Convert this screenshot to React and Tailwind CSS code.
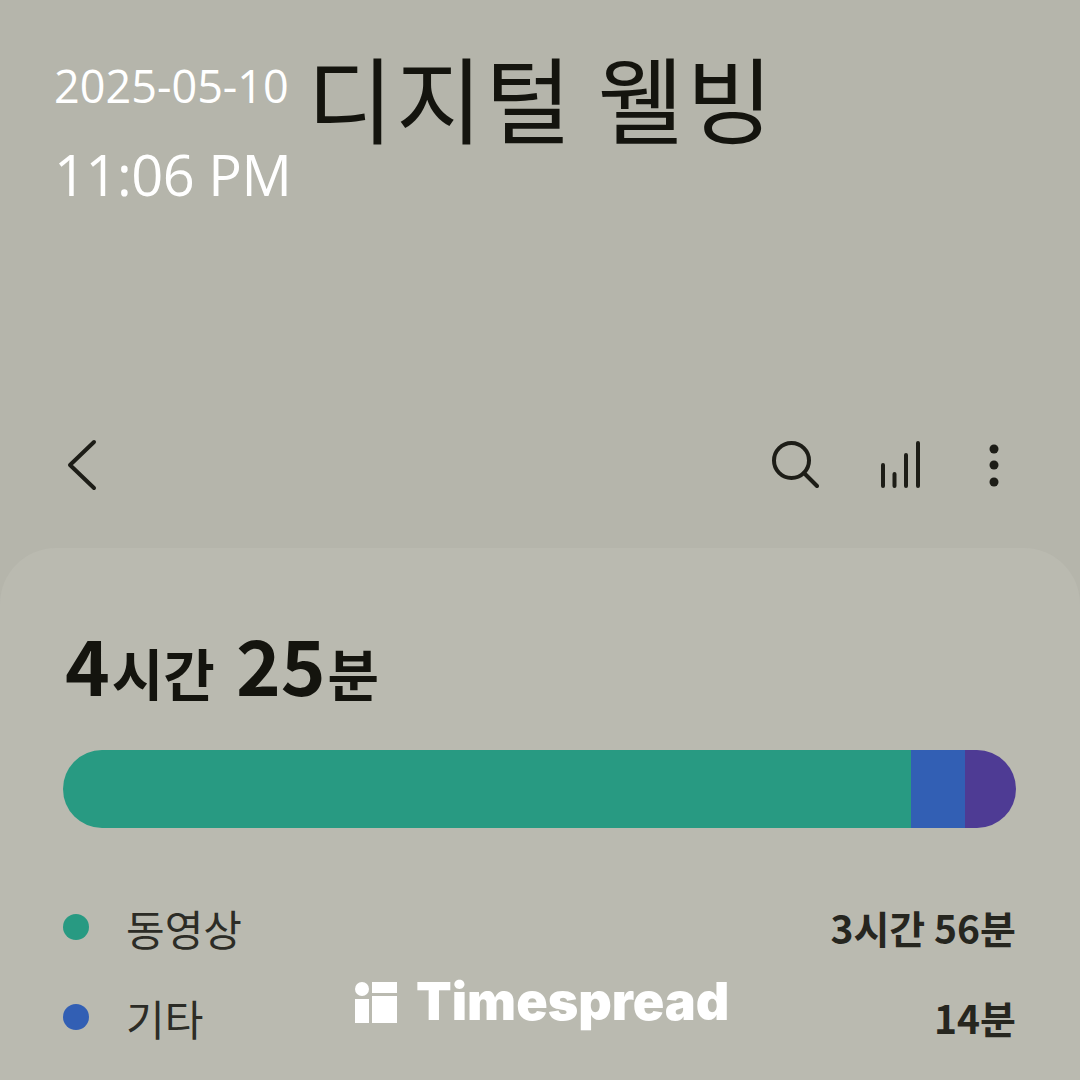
import React from 'react';

const KR = '[font-family:"Noto_Sans_CJK_KR",sans-serif]';

function LegendRow({ color, label, value }) {
  return (
    <div className="flex items-center h-[90px]">
      <span className="w-[26px] h-[26px] rounded-full shrink-0" style={{ backgroundColor: color }} />
      <span className="ml-[37px] text-[42px] text-[#2c2c26] font-normal">{label}</span>
      <span className="ml-auto text-[39px] font-bold text-[#26261f]">{value}</span>
    </div>
  );
}

function Logo() {
  return (
    <svg width="44" height="42" viewBox="0 0 44 42" fill="#fff">
      <circle cx="8" cy="8" r="7" />
      <rect x="1" y="18" width="14" height="24" />
      <rect x="18" y="1" width="25" height="11" />
      <rect x="18" y="15" width="25" height="27" />
    </svg>
  );
}

export default function App() {
  return (
    <div className={`relative w-[1080px] h-[1080px] overflow-hidden bg-[#b5b5ab] ${KR}`}>
      {/* date stamp */}
      <div className="absolute left-[54px] top-[58px] text-white font-['Open_Sans'] font-normal">
        <div className="text-[45px] leading-[56px] tracking-[0px]">2025-05-10</div>
        <div className="mt-[24px] text-[56px] leading-[72px] tracking-[-0.5px]">11:06 PM</div>
      </div>

      <div className="pl-[307px] pt-[36px] h-[426px]">
        <h1 className="text-[94px] leading-[120px] tracking-[2.500px] font-normal text-[#14140e]">디지털 웰빙</h1>
      </div>

      <div className="flex items-center justify-between pl-[66px] pr-[80px] h-[78px] text-[#1d1d17]">
        <svg width="32" height="52" viewBox="0 0 32 52" fill="none" stroke="currentColor" strokeWidth="4" strokeLinecap="round" strokeLinejoin="round">
          <path d="M28 3 L4 26 L28 49" />
        </svg>
        <div className="flex items-center">
          <svg width="48" height="48" viewBox="0 0 48 48" fill="none" stroke="currentColor" strokeWidth="4" strokeLinecap="round">
            <circle cx="20.5" cy="19.5" r="17.5" />
            <path d="M33 32 L46 45" />
          </svg>
          <svg className="ml-[61px]" width="44" height="48" viewBox="0 0 44 48" fill="none" stroke="currentColor" strokeWidth="4" strokeLinecap="round">
            <path d="M3 45V24M14.500 45V33M26 45V14M38 45V2" />
          </svg>
          <svg className="ml-[64px]" width="12" height="44" viewBox="0 0 12 44" fill="currentColor">
            <circle cx="6" cy="6" r="4.500" />
            <circle cx="6" cy="22" r="4.500" />
            <circle cx="6" cy="39" r="4.500" />
          </svg>
        </div>
      </div>

      <div className="mt-[44px] h-[600px] rounded-t-[56px] bg-[#babab0] px-[63px] pt-[75px]">
        <div className="flex items-baseline font-bold text-[#14140e] h-[80px] pl-[2px]">
          <span className="text-[76px] leading-[80px]">4</span>
          <span className="text-[56px] leading-[80px] ml-[2px]">시간</span>
          <span className="text-[76px] leading-[80px] ml-[21px]">25</span>
          <span className="text-[56px] leading-[80px] ml-[2px]">분</span>
        </div>
        <div className="mt-[47px] flex h-[78px] w-[953px] rounded-full overflow-hidden">
          <div className="w-[848px] bg-[#289a82]" />
          <div className="w-[54px] bg-[#325fb4]" />
          <div className="flex-1 bg-[#4e3b94]" />
        </div>
        <div className="mt-[54px] w-[953px]">
          <LegendRow color="#289a82" label="동영상" value="3시간 56분" />
          <LegendRow color="#325fb4" label="기타" value="14분" />
        </div>
      </div>

      {/* watermark */}
      <div className="absolute left-[354px] top-[979px] flex items-center gap-[18px]">
        <Logo />
        <span className="font-['Inter'] font-black text-[52px] leading-[46px] text-white">Timespread</span>
      </div>
    </div>
  );
}
